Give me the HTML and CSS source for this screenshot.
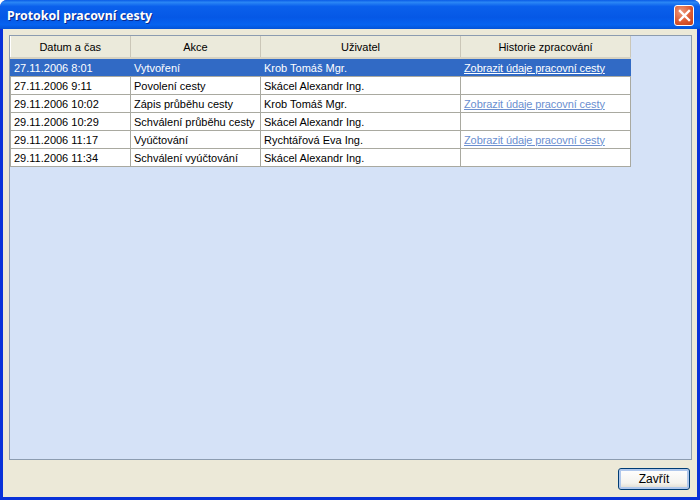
FILE: index.html
```html
<!DOCTYPE html>
<html lang="cs">
<head>
    <meta charset="UTF-8">
    <meta name="viewport" content="width=device-width, initial-scale=1.0">
    <title>Protokol pracovní cesty</title>
    <link rel="stylesheet" href="styles.css">
</head>
<body>

    <div class="window">
        <div class="titlebar">
            <span class="title">Protokol pracovní cesty</span>
            <button class="close" aria-label="Zavřít okno">
                <svg width="13" height="13" viewBox="0 0 13 13">
                    <path d="M2 2 L11 11 M11 2 L2 11" stroke="#fff" stroke-width="2.4" stroke-linecap="square" fill="none"/>
                </svg>
            </button>
        </div>

        <div class="body">
            <div class="panel">
                <table class="log">
                    <colgroup>
                        <col class="col-date">
                        <col class="col-action">
                        <col class="col-user">
                        <col class="col-history">
                    </colgroup>
                    <thead>
                        <tr>
                            <th>Datum a čas</th>
                            <th>Akce</th>
                            <th>Uživatel</th>
                            <th>Historie zpracování</th>
                        </tr>
                    </thead>
                    <tbody>
                        <tr class="selected">
                            <td>27.11.2006 8:01</td>
                            <td>Vytvoření</td>
                            <td>Krob Tomáš Mgr.</td>
                            <td><a href="#">Zobrazit údaje pracovní cesty</a></td>
                        </tr>
                        <tr>
                            <td>27.11.2006 9:11</td>
                            <td>Povolení cesty</td>
                            <td>Skácel Alexandr Ing.</td>
                            <td></td>
                        </tr>
                        <tr>
                            <td>29.11.2006 10:02</td>
                            <td>Zápis průběhu cesty</td>
                            <td>Krob Tomáš Mgr.</td>
                            <td><a href="#">Zobrazit údaje pracovní cesty</a></td>
                        </tr>
                        <tr>
                            <td>29.11.2006 10:29</td>
                            <td>Schválení průběhu cesty</td>
                            <td>Skácel Alexandr Ing.</td>
                            <td></td>
                        </tr>
                        <tr>
                            <td>29.11.2006 11:17</td>
                            <td>Vyúčtování</td>
                            <td>Rychtářová Eva Ing.</td>
                            <td><a href="#">Zobrazit údaje pracovní cesty</a></td>
                        </tr>
                        <tr>
                            <td>29.11.2006 11:34</td>
                            <td>Schválení vyúčtování</td>
                            <td>Skácel Alexandr Ing.</td>
                            <td></td>
                        </tr>
                    </tbody>
                </table>
            </div>

            <div class="footer">
                <button class="btn">Zavřít</button>
            </div>
        </div>
    </div>

</body>
</html>
```

FILE: styles.css
```css
html, body {
    margin: 0;
    padding: 0;
}
body {
    width: 700px;
    height: 500px;
    overflow: hidden;
    font-family: "Liberation Sans", Arial, sans-serif;
    font-size: 11px;
    color: #000;
}
.window {
    width: 700px;
    height: 500px;
    display: flex;
    flex-direction: column;
    background-color: #0831d9;
    border-radius: 7px 7px 0 0;
}
.titlebar {
    box-sizing: border-box;
    height: 29px;
    flex: none;
    display: flex;
    align-items: center;
    justify-content: space-between;
    padding: 2px 6px 0 7px;
    background: linear-gradient(to bottom, #0a5be6 0%, #2a86f5 8%, #0a60ec 22%, #0558e6 60%, #0663f0 85%, #0353d8 100%);
    border-radius: 7px 7px 0 0;
}
.title {
    font-family: "Noto Sans", Arial, sans-serif;
    font-size: 12.4px;
    font-weight: bold;
    color: #fff;
    text-shadow: 1px 1px 0 #0a2a8c;
}
.close {
    width: 20px;
    height: 21px;
    padding: 0;
    display: flex;
    align-items: center;
    justify-content: center;
    background: radial-gradient(circle at 35% 30%, #ee9a7c 0%, #dc5a32 55%, #c23c16 100%);
    border: 1px solid #fff;
    border-radius: 3px;
}
.body {
    flex: 1;
    display: flex;
    flex-direction: column;
    margin: 0 3px 3px 3px;
    padding: 6px 5px 0 6px;
    background-color: #ece9d8;
}
.panel {
    height: 423px;
    flex: none;
    background-color: #d5e2f7;
    border: 1px solid #8c9cb0;
}
.log {
    width: 620px;
    border-collapse: collapse;
    table-layout: fixed;
    background-color: #fff;
}
.col-date {
    width: 120px;
}
.col-action {
    width: 130px;
}
.col-user {
    width: 200px;
}
.col-history {
    width: 170px;
}
.log th {
    height: 21px;
    padding: 0;
    font-weight: normal;
    text-align: center;
    background-color: #ebeadb;
    border-right: 1px solid #cbc7b8;
    border-bottom: 2px solid #d6d2c2;
}
.log td {
    height: 17px;
    padding: 0 3px;
    border: 1px solid #a9a9a0;
    white-space: nowrap;
    overflow: hidden;
}
.log a {
    color: #6b8fd0;
    letter-spacing: -0.1px;
}
.selected td {
    background-color: #316ac5;
    color: #fff;
    border-top: none;
    border-left-color: #316ac5;
    border-right-color: #316ac5;
}
.selected a {
    color: #fff;
}
.footer {
    flex: 1;
    display: flex;
    justify-content: flex-end;
    align-items: flex-start;
    padding: 8px 2px 0 0;
}
.btn {
    width: 72px;
    height: 22px;
    padding: 0;
    font-family: "Liberation Sans", Arial, sans-serif;
    font-size: 12px;
    color: #000;
    background: linear-gradient(to bottom, #fff 0%, #f4f3ee 70%, #dcd8cc 100%);
    border: 1px solid #003c74;
    border-radius: 3px;
    box-shadow: inset 0 0 0 2px #b0c8ec;
}
```
